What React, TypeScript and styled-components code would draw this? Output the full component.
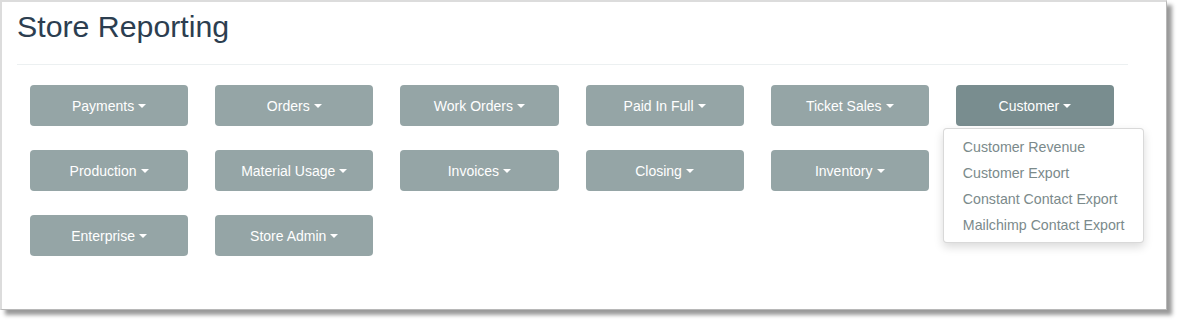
import React from "react";
import styled, { createGlobalStyle } from "styled-components";

const Global = createGlobalStyle`
  html, body { margin: 0; padding: 0; background: #ffffff; }
  body { font-family: "Liberation Sans", Arial, sans-serif; }
`;

const Page = styled.div`
  width: 1177px;
  height: 321px;
  overflow: hidden;
`;

const Frame = styled.div`
  box-sizing: border-box;
  width: 1167px;
  height: 310px;
  background: #fff;
  border-top: 2px solid #dcdcdc;
  border-left: 2px solid #dcdcdc;
  border-right: 1px solid #b8b8b8;
  border-bottom: 1px solid #b8b8b8;
  box-shadow: 5px 5px 4px rgba(0, 0, 0, 0.4);
  padding: 8px 0 0 15px;
`;

const Content = styled.div`
  width: 1111px;
`;

const Title = styled.h1`
  margin: 0;
  font-family: "Liberation Sans", Arial, sans-serif;
  font-weight: 400;
  font-size: 30.3px;
  line-height: 33px;
  color: #2c3e50;
`;

const Rule = styled.hr`
  margin: 21px 0 20px;
  border: 0;
  border-top: 1px solid #ecf0f1;
  height: 0;
`;

const Grid = styled.div`
  display: grid;
  grid-template-columns: repeat(6, 1fr);
  row-gap: 24px;
`;

const Cell = styled.div`
  position: relative;
  padding: 0 14px 0 13px;
`;

const Button = styled.button<{ $active?: boolean }>`
  display: flex;
  align-items: center;
  justify-content: center;
  width: 100%;
  height: 41px;
  border: 0;
  border-radius: 4px;
  background: ${(p) => (p.$active ? "#798d8f" : "#95a5a6")};
  color: #fff;
  font-family: "Liberation Sans", Arial, sans-serif;
  font-size: 14px;
  cursor: pointer;
  padding: 0 10px;
`;

const Caret = styled.span`
  display: inline-block;
  width: 0;
  height: 0;
  margin-left: 4px;
  margin-top: 1px;
  border-top: 4px solid #fff;
  border-left: 4px solid transparent;
  border-right: 4px solid transparent;
`;

const Menu = styled.ul`
  position: absolute;
  top: 43px;
  left: 0;
  margin: 0;
  padding: 5px 0 4px;
  list-style: none;
  width: 201px;
  box-sizing: border-box;
  background: #fff;
  border: 1px solid rgba(0, 0, 0, 0.15);
  border-radius: 4px;
  box-shadow: 0 4px 10px rgba(0, 0, 0, 0.15);
  z-index: 10;
`;

const MenuItem = styled.li`
  padding: 0 19px;
  line-height: 26px;
  font-size: 14.2px;
  color: #7b8a8b;
  white-space: nowrap;
`;

const buttons = [
  "Payments",
  "Orders",
  "Work Orders",
  "Paid In Full",
  "Ticket Sales",
  "Customer",
  "Production",
  "Material Usage",
  "Invoices",
  "Closing",
  "Inventory",
  null,
  "Enterprise",
  "Store Admin",
];

const menuItems = [
  "Customer Revenue",
  "Customer Export",
  "Constant Contact Export",
  "Mailchimp Contact Export",
];

export default function App() {
  return (
    <>
      <Global />
      <Page>
        <Frame>
          <Content>
            <Title>Store Reporting</Title>
            <Rule />
            <Grid>
              {buttons.map((label, i) =>
                label === null ? (
                  <Cell key={i} />
                ) : (
                  <Cell key={i}>
                    <Button $active={label === "Customer"}>
                      {label}
                      <Caret />
                    </Button>
                    {label === "Customer" && (
                      <Menu>
                        {menuItems.map((m) => (
                          <MenuItem key={m}>{m}</MenuItem>
                        ))}
                      </Menu>
                    )}
                  </Cell>
                )
              )}
            </Grid>
          </Content>
        </Frame>
      </Page>
    </>
  );
}
